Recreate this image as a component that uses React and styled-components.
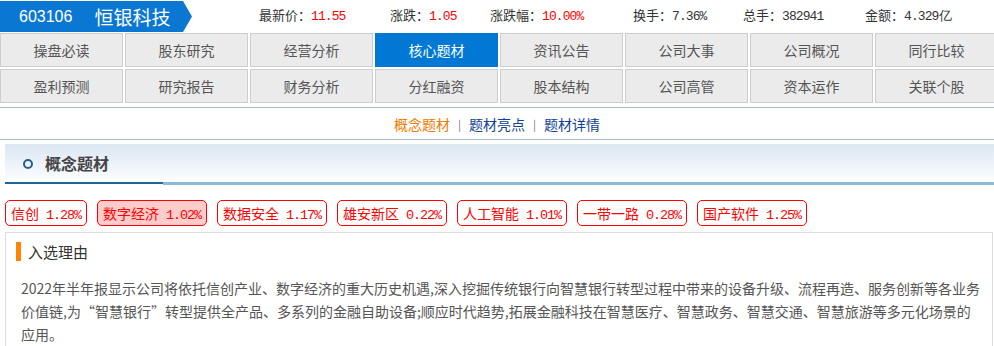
import React from 'react'
import styled, { createGlobalStyle } from 'styled-components'

const GlobalStyle = createGlobalStyle`
    body {
        margin: 0;
        background: #fff;
        font-family: "Noto Sans CJK SC", "Liberation Sans", sans-serif;
        overflow: hidden;
    }
`

const quotes = [
    { label: '最新价：', value: '11.55', width: 131, red: true },
    { label: '涨跌：', value: '1.05', width: 100, red: true },
    { label: '涨跌幅：', value: '10.00%', width: 143, red: true },
    { label: '换手：', value: '7.36%', width: 110 },
    { label: '总手：', value: '382941', width: 122 },
    { label: '金额：', value: '4.329亿' },
]

const navRows = [
    ['操盘必读', '股东研究', '经营分析', '核心题材', '资讯公告', '公司大事', '公司概况', '同行比较'],
    ['盈利预测', '研究报告', '财务分析', '分红融资', '股本结构', '公司高管', '资本运作', '关联个股'],
]

const tags = [
    { name: '信创', pct: '1.28%' },
    { name: '数字经济', pct: '1.02%', hot: true },
    { name: '数据安全', pct: '1.17%' },
    { name: '雄安新区', pct: '0.22%' },
    { name: '人工智能', pct: '1.01%' },
    { name: '一带一路', pct: '0.28%' },
    { name: '国产软件', pct: '1.25%' },
]

export default function App() {
    return (
        <>
            <GlobalStyle />
            <Page>
                <TopBar>
                    <Banner>
                        <Code>603106</Code>
                        <Name>恒银科技</Name>
                    </Banner>
                    <Quotes>
                        {quotes.map(q => (
                            <QuoteItem key={q.label} $width={q.width}>
                                {q.label}
                                <QuoteValue $red={q.red}>{q.value}</QuoteValue>
                            </QuoteItem>
                        ))}
                    </Quotes>
                </TopBar>

                <NavGrid>
                    {navRows.flat().map(item => (
                        <NavCell key={item} $active={item === '核心题材'}>{item}</NavCell>
                    ))}
                </NavGrid>

                <SubNav>
                    <SubLink $current>概念题材</SubLink>
                    <Sep>|</Sep>
                    <SubLink>题材亮点</SubLink>
                    <Sep>|</Sep>
                    <SubLink>题材详情</SubLink>
                </SubNav>

                <Section>
                    <SectionHead>
                        <Ring />
                        <SectionTitle>概念题材</SectionTitle>
                    </SectionHead>
                    <Rule>
                        <RuleDark />
                        <RuleLight />
                    </Rule>
                </Section>

                <TagRow>
                    {tags.map(t => (
                        <Tag key={t.name} $hot={t.hot}>
                            {t.name}<TagPct>{t.pct}</TagPct>
                        </Tag>
                    ))}
                </TagRow>

                <ReasonBox>
                    <ReasonTitle>入选理由</ReasonTitle>
                    <ReasonText>
                        2022年半年报显示公司将依托信创产业、数字经济的重大历史机遇,深入挖掘传统银行向智慧银行转型过程中带来的设备升级、流程再造、服务创新等各业务价值链,为“智慧银行”转型提供全产品、多系列的金融自助设备;顺应时代趋势,拓展金融科技在智慧医疗、智慧政务、智慧交通、智慧旅游等多元化场景的应用。
                    </ReasonText>
                </ReasonBox>
            </Page>
        </>
    )
}

const Page = styled.div`
    width: 994px;
`

const TopBar = styled.div`
    height: 32px;
    display: flex;
    align-items: center;
`

const Banner = styled.div`
    width: 192px;
    height: 31px;
    margin-top: 1px;
    flex-shrink: 0;
    background: #0a78d2;
    clip-path: polygon(0 0, 183px 0, 192px 50%, 183px 100%, 0 100%);
    display: flex;
    align-items: center;
    color: #fff;
`

const Code = styled.span`
    font-family: "Liberation Sans", sans-serif;
    font-size: 16px;
    margin-left: 19px;
`

const Name = styled.span`
    font-size: 19px;
    margin-left: 22px;
    line-height: 1;
`

const Quotes = styled.div`
    display: flex;
    margin-left: 67px;
    font-size: 13px;
    color: #333;
    line-height: 18px;
`

const QuoteItem = styled.div`
    width: ${props => props.$width ? props.$width + 'px' : 'auto'};
    white-space: nowrap;
`

const QuoteValue = styled.span`
    color: ${props => props.$red ? '#f00' : '#333'};
    font-family: "Liberation Mono", monospace;
    font-size: 13px;
    letter-spacing: -0.9px;
`

const NavGrid = styled.div`
    margin-top: 1px;
    display: grid;
    grid-template-columns: repeat(8, 123px);
    grid-auto-rows: 34px;
    gap: 2px;
    overflow: hidden;
`

const NavCell = styled.div`
    box-sizing: border-box;
    border: 1px solid ${props => props.$active ? '#0078d4' : '#cdcdcd'};
    background: ${props => props.$active ? '#0078d4' : '#ebebeb'};
    color: ${props => props.$active ? '#fff' : '#555'};
    font-size: 14px;
    display: flex;
    align-items: center;
    justify-content: center;
`

const SubNav = styled.div`
    margin-top: 4px;
    height: 31px;
    border-top: 1px solid #a7bdd3;
    border-bottom: 1px solid #a7bdd3;
    display: flex;
    align-items: center;
    justify-content: center;
    font-size: 14px;
`

const SubLink = styled.span`
    color: ${props => props.$current ? '#f07a00' : '#123f99'};
`

const Sep = styled.span`
    color: #777;
    font-size: 11px;
    margin: 0 8px;
`

const Section = styled.div`
    margin: 4px 0 0 5px;
`

const SectionHead = styled.div`
    height: 38px;
    background: linear-gradient(#dbe6f2, #fdfeff);
    display: flex;
    align-items: center;
`

const Ring = styled.span`
    width: 6px;
    height: 6px;
    border: 2px solid #2a5d8a;
    border-radius: 50%;
    margin: 1px 0 0 18px;
`

const SectionTitle = styled.span`
    font-size: 16px;
    font-weight: bold;
    color: #444;
    margin-left: 12px;
`

const Rule = styled.div`
    display: flex;
    align-items: flex-start;
`

const RuleDark = styled.div`
    width: 158px;
    height: 2px;
    background: #1f6699;
`

const RuleLight = styled.div`
    flex: 1;
    height: 3px;
    background: #8dbadc;
`

const TagRow = styled.div`
    display: flex;
    gap: 10px;
    margin: 15px 0 0 5px;
`

const Tag = styled.span`
    box-sizing: border-box;
    height: 26px;
    line-height: 24px;
    padding: 0 5px;
    border: 1px solid #f00;
    border-radius: 5px;
    background: ${props => props.$hot ? '#ffcccc' : '#fff'};
    color: #f00;
    font-size: 14px;
    white-space: nowrap;
`

const TagPct = styled.span`
    font-family: "Liberation Mono", monospace;
    font-size: 13.5px;
    letter-spacing: -1.1px;
    margin-left: 7px;
`

const ReasonBox = styled.div`
    margin: 6px 0 0 5px;
    width: 988px;
    box-sizing: border-box;
    border: 1px solid #ddd;
    border-bottom: none;
    padding: 9px 0 0 10px;
`

const ReasonTitle = styled.div`
    border-left: 5px solid #ff8400;
    padding-left: 7px;
    height: 19px;
    line-height: 19px;
    font-size: 15px;
    color: #333;
`

const ReasonText = styled.p`
    margin: 16px 0 0 5px;
    width: 961px;
    font-size: 14px;
    line-height: 23px;
    color: #555;
`
